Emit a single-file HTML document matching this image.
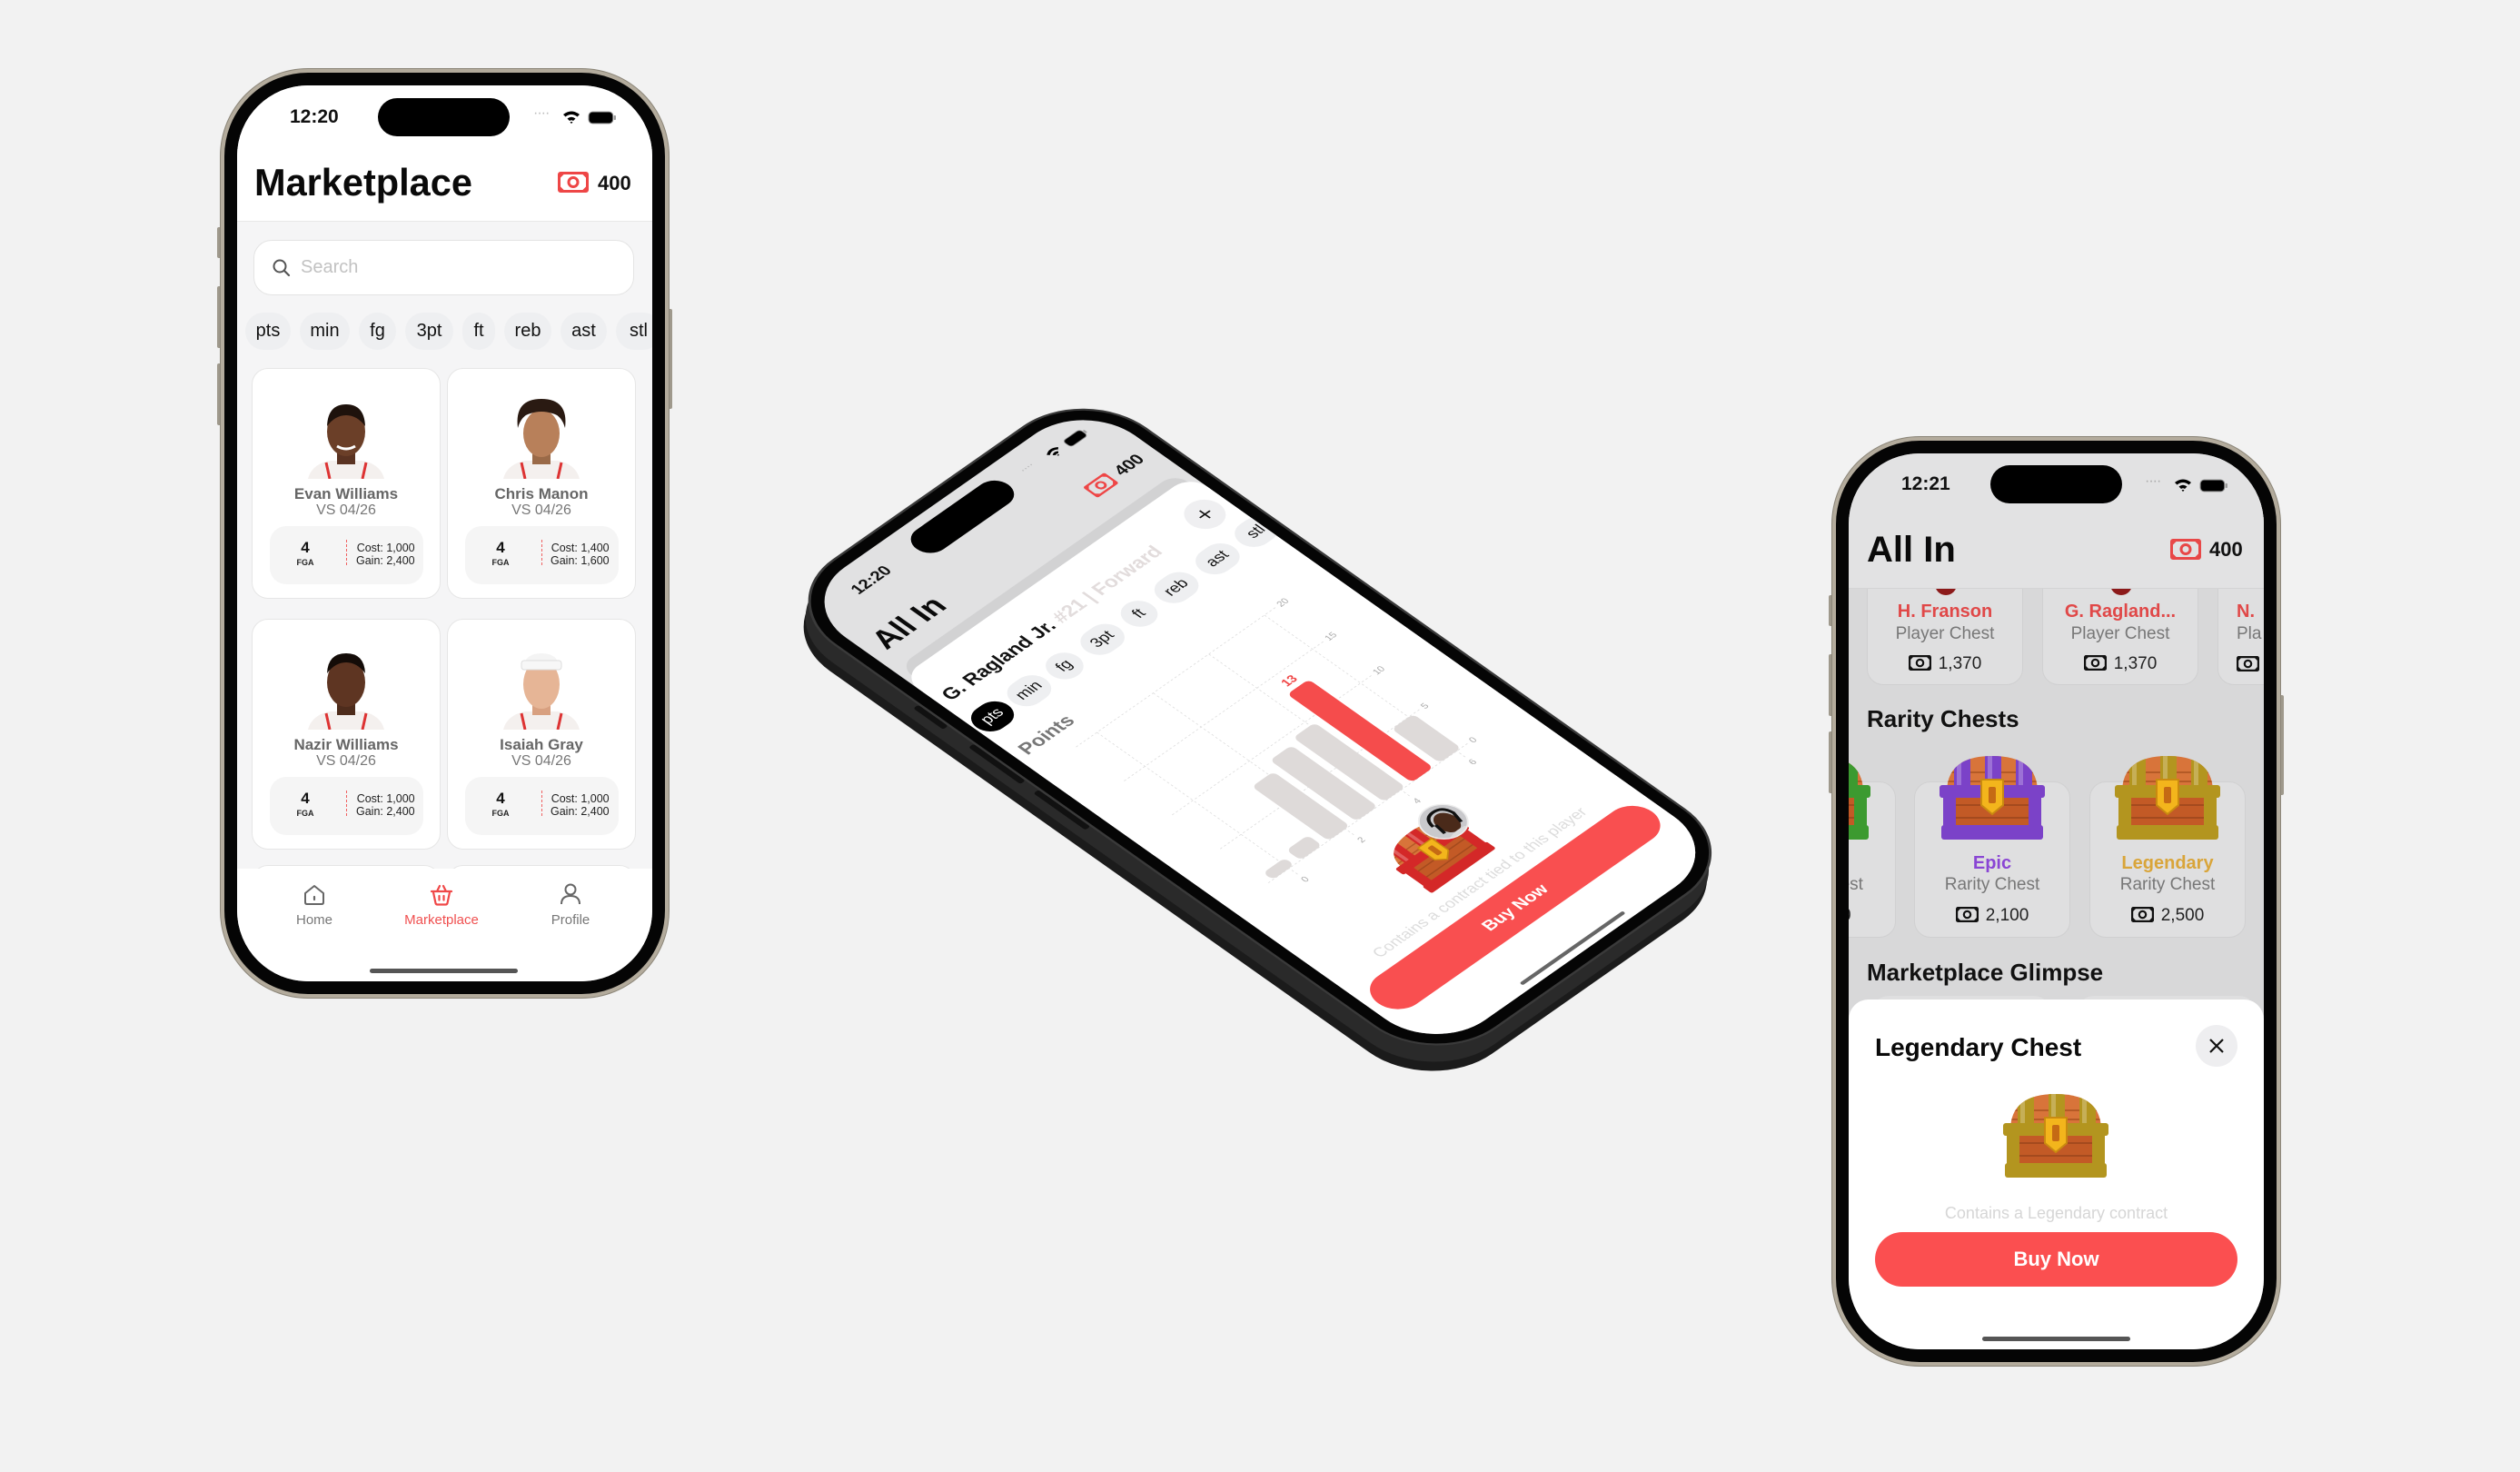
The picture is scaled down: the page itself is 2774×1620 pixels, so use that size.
<!DOCTYPE html>
<html><head><meta charset="utf-8">
<style>
*{margin:0;padding:0;box-sizing:border-box}
body{width:2774px;height:1620px;background:#f2f2f2;position:relative;overflow:hidden;font-family:"Liberation Sans",sans-serif}
.abs{position:absolute}
.phone{position:absolute;width:493px;height:1022px;border-radius:96px;background:#050505;border:4px solid #b3ab9c;box-shadow:0 0 0 1px #8c8679}
.screen{position:absolute;left:14px;top:14px;width:457px;height:986px;border-radius:78px;overflow:hidden;background:#fff}
.island{position:absolute;width:145px;height:42px;border-radius:21px;background:#000}
.btn{position:absolute;background:#9f998c;border-radius:2px}
.t{position:absolute;white-space:nowrap}
.chip{position:absolute;height:41px;border-radius:21px;background:#eeeff1;font-size:20px;color:#111;display:flex;align-items:center;justify-content:center}
.card{position:absolute;background:#fff;border:1.5px solid #e6e6e6;border-radius:18px}
.stat{position:absolute;background:#f5f5f5;border-radius:18px}
.c{text-align:center}
</style></head><body>

<svg width="0" height="0" style="position:absolute">
<defs>
<clipPath id="dome"><path d="M14 52 Q14 12 64 12 Q114 12 114 52 Z"/></clipPath>
<symbol id="cash" viewBox="0 0 34 23"><rect x="1.5" y="1.5" width="31" height="20" rx="1.5" fill="none" stroke="currentColor" stroke-width="3"/><circle cx="17" cy="11.5" r="5" fill="none" stroke="currentColor" stroke-width="3"/><path d="M1.5 6 L6 1.5 M28 1.5 L32.5 6 M1.5 17 L6 21.5 M28 21.5 L32.5 17" stroke="currentColor" stroke-width="3"/></symbol>
<symbol id="chest" viewBox="0 0 128 110">
<path d="M14 52 Q14 12 64 12 Q114 12 114 52 Z" fill="#d8743a"/>
<g clip-path="url(#dome)">
<path d="M14 30 H114 M14 40 H114" stroke="#b45a26" stroke-width="2"/>
<rect x="22" y="0" width="18" height="60" fill="var(--f)"/>
<rect x="56" y="0" width="18" height="60" fill="var(--f)"/>
<rect x="90" y="0" width="18" height="60" fill="var(--f)"/>
<rect x="25" y="0" width="5" height="60" fill="#fff" opacity="0.25"/>
<rect x="59" y="0" width="5" height="60" fill="#fff" opacity="0.25"/>
<rect x="93" y="0" width="5" height="60" fill="#fff" opacity="0.25"/>
</g>
<rect x="12" y="50" width="104" height="50" fill="#c35a26"/>
<path d="M14 66 H114 M14 80 H114" stroke="#a44a1e" stroke-width="2"/>
<rect x="6" y="44" width="116" height="14" rx="3" fill="var(--f)"/>
<rect x="8" y="88" width="112" height="16" rx="3" fill="var(--f)"/>
<rect x="10" y="50" width="14" height="50" fill="var(--f)"/>
<rect x="104" y="50" width="14" height="50" fill="var(--f)"/>
<path d="M52 38 H76 V66 L64 76 L52 66 Z" fill="#f3b51c" stroke="#c98a10" stroke-width="2"/>
<rect x="60" y="46" width="8" height="18" rx="2" fill="#c56a14"/>
</symbol>
<symbol id="wifi" viewBox="0 0 20 15"><path d="M1 5 Q10 -2 19 5 L16.5 7.5 Q10 2.5 3.5 7.5 Z M5.5 9.5 Q10 6 14.5 9.5 L12 12 Q10 10.5 8 12 Z M10 15 L8.5 13.5 Q10 12.5 11.5 13.5 Z" fill="#000"/></symbol>
<symbol id="batt" viewBox="0 0 30 14"><rect x="1" y="1" width="25" height="12" rx="4" fill="#000" stroke="#888" stroke-width="1"/><rect x="27" y="4.5" width="2" height="5" rx="1" fill="#999"/></symbol>
</defs>
</svg>

<!-- ============ LEFT PHONE ============ -->
<div class="btn" style="left:239px;top:250px;width:5px;height:34px"></div>
<div class="btn" style="left:239px;top:315px;width:5px;height:68px"></div>
<div class="btn" style="left:239px;top:400px;width:5px;height:68px"></div>
<div class="btn" style="left:735px;top:340px;width:5px;height:110px"></div>
<div class="phone" style="left:243px;top:76px">
 <div class="screen" style="background:#f5f5f6">
  <div class="abs" style="left:0;top:0;width:457px;height:150px;background:#fff;border-bottom:1.5px solid #e8e8e8"></div>
  <div class="t" style="left:58px;top:23px;font-size:21px;font-weight:bold;color:#111">12:20</div>
  <div class="island" style="left:155px;top:14px"></div>
  <div class="t" style="left:326px;top:22px;font-size:16px;color:#bbb;letter-spacing:-1px">····</div>
  <svg class="abs" style="left:358px;top:27px" width="20" height="15"><use href="#wifi"/></svg>
  <svg class="abs" style="left:386px;top:28px" width="32" height="15"><use href="#batt"/></svg>
  <div class="t" style="left:19px;top:83px;font-size:41.5px;font-weight:bold;color:#0a0a0a">Marketplace</div>
  <svg class="abs" style="left:353px;top:95px;color:#ee4646" width="34" height="23"><use href="#cash"/></svg>
  <div class="t" style="left:397px;top:95px;font-size:22px;font-weight:bold;color:#111">400</div>
  <div class="abs" style="left:18px;top:170px;width:419px;height:61px;background:#fff;border:1.5px solid #e4e4e4;border-radius:20px"></div>
  <svg class="abs" style="left:38px;top:190px" width="22" height="22" viewBox="0 0 22 22"><circle cx="9" cy="9" r="6.5" fill="none" stroke="#555" stroke-width="2"/><path d="M14 14 L19 19" stroke="#555" stroke-width="2.2" stroke-linecap="round"/></svg>
  <div class="t" style="left:70px;top:189px;font-size:20px;color:#c2c2c2">Search</div>
  <div class="chip" style="left:9px;top:250px;width:50px">pts</div>
  <div class="chip" style="left:69px;top:250px;width:55px">min</div>
  <div class="chip" style="left:134px;top:250px;width:41px">fg</div>
  <div class="chip" style="left:185px;top:250px;width:53px">3pt</div>
  <div class="chip" style="left:248px;top:250px;width:36px">ft</div>
  <div class="chip" style="left:294px;top:250px;width:52px">reb</div>
  <div class="chip" style="left:356px;top:250px;width:51px">ast</div>
  <div class="chip" style="left:417px;top:250px;width:50px">stl</div>

  <div class="card" style="left:16px;top:311px;width:208px;height:254px"></div>
  <div class="card" style="left:231px;top:311px;width:208px;height:254px"></div>
  <div class="card" style="left:16px;top:587px;width:208px;height:254px"></div>
  <div class="card" style="left:231px;top:587px;width:208px;height:254px"></div>
  <div class="card" style="left:16px;top:858px;width:208px;height:80px"></div>
  <div class="card" style="left:231px;top:858px;width:208px;height:80px"></div>

  <svg class="abs" style="left:72px;top:341px" width="96" height="92" viewBox="0 0 96 92"><path d="M6 92 Q10 76 30 72 L66 72 Q86 76 90 92 Z" fill="#f4f0ee"/><path d="M26 74 L30 92 M70 74 L66 92" stroke="#d33" stroke-width="3"/><rect x="38" y="58" width="20" height="18" fill="#5a3322"/><ellipse cx="48" cy="40" rx="21" ry="27" fill="#6b3f28"/><path d="M27 34 Q28 10 48 10 Q68 10 69 34 Q60 22 48 22 Q36 22 27 34Z" fill="#1e120c"/><path d="M38 56 Q48 62 58 56" stroke="#fff" stroke-width="3" fill="none"/></svg>
  <svg class="abs" style="left:287px;top:341px" width="96" height="92" viewBox="0 0 96 92"><path d="M6 92 Q10 76 30 72 L66 72 Q86 76 90 92 Z" fill="#f4f0ee"/><path d="M26 74 L30 92 M70 74 L66 92" stroke="#d33" stroke-width="3"/><rect x="38" y="58" width="20" height="18" fill="#9a6a48"/><ellipse cx="48" cy="42" rx="20" ry="26" fill="#b8805a"/><path d="M22 36 Q18 4 48 4 Q78 4 74 36 Q70 22 60 20 Q48 16 36 20 Q26 22 22 36Z" fill="#2a1a12"/></svg>
  <svg class="abs" style="left:72px;top:617px" width="96" height="92" viewBox="0 0 96 92"><path d="M6 92 Q10 76 30 72 L66 72 Q86 76 90 92 Z" fill="#f4f0ee"/><path d="M26 74 L30 92 M70 74 L66 92" stroke="#d33" stroke-width="3"/><rect x="38" y="58" width="20" height="18" fill="#4e2c1c"/><ellipse cx="48" cy="40" rx="21" ry="27" fill="#5e3522"/><path d="M27 30 Q28 8 48 8 Q68 8 69 30 Q60 18 48 18 Q36 18 27 30Z" fill="#140c08"/></svg>
  <svg class="abs" style="left:287px;top:617px" width="96" height="92" viewBox="0 0 96 92"><path d="M6 92 Q10 76 30 72 L66 72 Q86 76 90 92 Z" fill="#f4f0ee"/><path d="M26 74 L30 92 M70 74 L66 92" stroke="#d33" stroke-width="3"/><rect x="38" y="58" width="20" height="18" fill="#d8a080"/><ellipse cx="48" cy="42" rx="20" ry="27" fill="#e6b596"/><path d="M27 28 Q28 8 48 8 Q68 8 69 28 L69 24 L27 24Z" fill="#f4f4f4"/><rect x="26" y="16" width="44" height="10" rx="3" fill="#f7f7f7" stroke="#ddd"/></svg>

  <div class="t c" style="left:16px;width:208px;top:440px;font-size:17px;font-weight:bold;color:#666">Evan Williams</div>
  <div class="t c" style="left:16px;width:208px;top:459px;font-size:16px;color:#777">VS 04/26</div>
  <div class="t c" style="left:231px;width:208px;top:440px;font-size:17px;font-weight:bold;color:#666">Chris Manon</div>
  <div class="t c" style="left:231px;width:208px;top:459px;font-size:16px;color:#777">VS 04/26</div>
  <div class="t c" style="left:16px;width:208px;top:716px;font-size:17px;font-weight:bold;color:#666">Nazir Williams</div>
  <div class="t c" style="left:16px;width:208px;top:735px;font-size:16px;color:#777">VS 04/26</div>
  <div class="t c" style="left:231px;width:208px;top:716px;font-size:17px;font-weight:bold;color:#666">Isaiah Gray</div>
  <div class="t c" style="left:231px;width:208px;top:735px;font-size:16px;color:#777">VS 04/26</div>

  <div class="stat" style="left:36px;top:485px;width:169px;height:64px"></div>
  <div class="stat" style="left:251px;top:485px;width:169px;height:64px"></div>
  <div class="stat" style="left:36px;top:761px;width:169px;height:64px"></div>
  <div class="stat" style="left:251px;top:761px;width:169px;height:64px"></div>

  <div class="t c" style="left:55px;width:40px;top:499px;font-size:17px;font-weight:bold;color:#111">4</div>
  <div class="t c" style="left:55px;width:40px;top:520px;font-size:9px;font-weight:bold;color:#222">FGA</div>
  <div class="abs" style="left:120px;top:500px;height:28px;border-left:1.5px dashed #f06060"></div>
  <div class="t" style="left:131px;top:502px;font-size:12.5px;color:#222;line-height:14px;text-align:right">Cost: 1,000<br>Gain: 2,400</div>
  <div class="t c" style="left:270px;width:40px;top:499px;font-size:17px;font-weight:bold;color:#111">4</div>
  <div class="t c" style="left:270px;width:40px;top:520px;font-size:9px;font-weight:bold;color:#222">FGA</div>
  <div class="abs" style="left:335px;top:500px;height:28px;border-left:1.5px dashed #f06060"></div>
  <div class="t" style="left:345px;top:502px;font-size:12.5px;color:#222;line-height:14px;text-align:right">Cost: 1,400<br>Gain: 1,600</div>
  <div class="t c" style="left:55px;width:40px;top:775px;font-size:17px;font-weight:bold;color:#111">4</div>
  <div class="t c" style="left:55px;width:40px;top:796px;font-size:9px;font-weight:bold;color:#222">FGA</div>
  <div class="abs" style="left:120px;top:776px;height:28px;border-left:1.5px dashed #f06060"></div>
  <div class="t" style="left:131px;top:778px;font-size:12.5px;color:#222;line-height:14px;text-align:right">Cost: 1,000<br>Gain: 2,400</div>
  <div class="t c" style="left:270px;width:40px;top:775px;font-size:17px;font-weight:bold;color:#111">4</div>
  <div class="t c" style="left:270px;width:40px;top:796px;font-size:9px;font-weight:bold;color:#222">FGA</div>
  <div class="abs" style="left:335px;top:776px;height:28px;border-left:1.5px dashed #f06060"></div>
  <div class="t" style="left:345px;top:778px;font-size:12.5px;color:#222;line-height:14px;text-align:right">Cost: 1,000<br>Gain: 2,400</div>

  <div class="abs" style="left:0;top:862px;width:457px;height:124px;background:#fff"></div>
  <svg class="abs" style="left:72px;top:878px" width="26" height="26" viewBox="0 0 26 26"><path d="M3 11 L13 3 L23 11 V21 Q23 23 21 23 H5 Q3 23 3 21 Z" fill="none" stroke="#666" stroke-width="2" stroke-linejoin="round"/><path d="M13 15 V18" stroke="#666" stroke-width="2.2" stroke-linecap="round"/></svg>
  <div class="t c" style="left:45px;width:80px;top:910px;font-size:15px;color:#777">Home</div>
  <svg class="abs" style="left:212px;top:878px" width="26" height="26" viewBox="0 0 26 26"><path d="M2 9 H24 M8 9 L11 3 M18 9 L15 3" stroke="#f04848" stroke-width="2.2" fill="none" stroke-linecap="round"/><path d="M4 10 L6.5 22 Q7 23.5 8.5 23.5 H17.5 Q19 23.5 19.5 22 L22 10" fill="none" stroke="#f04848" stroke-width="2.2"/><path d="M10.5 14 V18.5 M15.5 14 V18.5" stroke="#f04848" stroke-width="2.2" stroke-linecap="round"/></svg>
  <div class="t c" style="left:175px;width:100px;top:910px;font-size:15px;color:#f05050">Marketplace</div>
  <svg class="abs" style="left:354px;top:877px" width="26" height="26" viewBox="0 0 26 26"><circle cx="13" cy="8" r="5.5" fill="none" stroke="#666" stroke-width="2"/><path d="M3 24 Q3 15 13 15 Q23 15 23 24" fill="none" stroke="#666" stroke-width="2"/></svg>
  <div class="t c" style="left:327px;width:80px;top:910px;font-size:15px;color:#777">Profile</div>
  <div class="abs" style="left:146px;top:972px;width:163px;height:5px;border-radius:3px;background:#555"></div>
 </div>
</div>

<!-- ============ MIDDLE PHONE (tilted) ============ -->
<div class="abs" style="left:0;top:0;width:493px;height:1022px;transform-origin:0 0;transform:matrix(0.696,-0.487,0.7149,0.5053,845,690);border-radius:96px;background:#1b1b1b"></div>
<div class="abs" style="left:0;top:0;width:493px;height:1022px;transform-origin:0 0;transform:matrix(0.696,-0.487,0.7149,0.5053,847,680);border-radius:96px;background:#2a2a2a"></div>
<div class="abs" style="left:0;top:0;width:493px;height:1022px;transform-origin:0 0;transform:matrix(0.696,-0.487,0.7149,0.5053,850,662)">
 <div class="abs" style="left:-8px;top:225px;width:8px;height:46px;background:#111;border-radius:3px"></div>
 <div class="abs" style="left:-8px;top:310px;width:8px;height:80px;background:#111;border-radius:3px"></div>
 <div class="abs" style="left:-8px;top:410px;width:8px;height:80px;background:#111;border-radius:3px"></div>
 <div class="abs" style="left:0;top:0;width:493px;height:1022px;border-radius:96px;background:#050505;border:3px solid #3a3a3a">
 <div class="screen" style="left:15px;top:15px;background:#e1e1e2">
  <div class="t" style="left:58px;top:23px;font-size:21px;font-weight:bold;color:#111">12:20</div>
  <div class="island" style="left:156px;top:14px"></div>
  <div class="t" style="left:326px;top:22px;font-size:16px;color:#bbb;letter-spacing:-1px">····</div>
  <svg class="abs" style="left:364px;top:27px" width="20" height="15"><use href="#wifi"/></svg>
  <svg class="abs" style="left:392px;top:28px" width="32" height="15"><use href="#batt"/></svg>
  <div class="t" style="left:18px;top:88px;font-size:40px;font-weight:bold;color:#0a0a0a">All In</div>
  <svg class="abs" style="left:357px;top:95px;color:#ee4646" width="34" height="23"><use href="#cash"/></svg>
  <div class="t" style="left:401px;top:93px;font-size:22px;font-weight:bold;color:#111">400</div>
  <div class="abs" style="left:10px;top:150px;width:437px;height:40px;background:#d2d2d3;border-radius:20px"></div>
  <div class="abs" style="left:0;top:164px;width:457px;height:830px;background:#fff;border-radius:26px 26px 0 0"></div>
  <div class="t" style="left:12px;top:206px;font-size:25px;font-weight:bold;color:#111">G. Ragland Jr. <span style="color:#e2dcdc">#21 | Forward</span></div>
  <div class="abs" style="left:401px;top:195px;width:46px;height:46px;border-radius:23px;background:#efeff1"></div>
  <svg class="abs" style="left:414px;top:208px" width="20" height="20" viewBox="0 0 20 20"><path d="M2 10 H18 M10 2 V18" stroke="#111" stroke-width="2"/></svg>
  <div class="chip" style="left:3px;top:256px;width:50px;background:#000;color:#fff">pts</div>
  <div class="chip" style="left:60px;top:256px;width:52px">min</div>
  <div class="chip" style="left:121px;top:256px;width:42px">fg</div>
  <div class="chip" style="left:176px;top:256px;width:52px">3pt</div>
  <div class="chip" style="left:240px;top:256px;width:40px">ft</div>
  <div class="chip" style="left:293px;top:256px;width:52px">reb</div>
  <div class="chip" style="left:358px;top:256px;width:52px">ast</div>
  <div class="chip" style="left:420px;top:256px;width:50px">stl</div>
  <div class="t" style="left:12px;top:324px;font-size:25px;font-weight:bold;color:#777">Points</div>
  <svg class="abs" style="left:40px;top:360px" width="400" height="350" viewBox="40 360 400 350">
   <g stroke="#ddd" stroke-width="1" stroke-dasharray="3 3">
    <path d="M60 374 H375 M60 448 H375 M60 522 H375 M60 596 H375 M60 670 H375"/>
    <path d="M93 374 V685 M182 374 V685 M270 374 V685 M358 374 V685"/>
   </g>
   <g fill="#dedad9">
    <rect x="67" y="655" width="34" height="15" rx="7"/>
    <rect x="111" y="648" width="34" height="22" rx="7"/>
    <rect x="155" y="552" width="34" height="118" rx="7"/>
    <rect x="199" y="537" width="34" height="133" rx="7"/>
    <rect x="243" y="530" width="34" height="140" rx="7"/>
    <rect x="331" y="596" width="34" height="74" rx="7"/>
   </g>
   <rect x="287" y="478" width="34" height="192" rx="7" fill="#f54c4c"/>
   <text x="295" y="470" font-size="16" fill="#f04848" font-family="Liberation Sans" font-weight="bold">13</text>
   <g font-size="12" fill="#aaa" font-family="Liberation Sans">
    <text x="380" y="378">20</text><text x="380" y="452">15</text><text x="380" y="526">10</text><text x="380" y="600">5</text><text x="380" y="674">0</text>
    <text x="90" y="698">0</text><text x="179" y="698">2</text><text x="267" y="698">4</text><text x="355" y="698">6</text>
   </g>
  </svg>
  <svg class="abs" style="left:170px;top:712px" width="118" height="100"><use href="#chest" style="--f:#d42828"/></svg>
  <div class="abs" style="left:240px;top:709px;width:56px;height:56px;border-radius:28px;background:#c9c9cc;border:2px solid #eee;overflow:hidden">
   <svg width="56" height="56" viewBox="0 0 56 56"><ellipse cx="28" cy="30" rx="13" ry="17" fill="#4a2a1a"/><path d="M12 24 Q14 8 28 8 Q42 8 44 24 L40 40 M16 24 L14 40" stroke="#111" stroke-width="4" fill="none"/><path d="M8 56 Q12 46 28 46 Q44 46 48 56Z" fill="#ddd"/></svg>
  </div>
  <div class="t c" style="left:0;width:457px;top:821px;font-size:20px;color:#dcdcdc">Contains a contract tied to this player</div>
  <div class="abs" style="left:12px;top:856px;width:433px;height:60px;border-radius:30px;background:#f94f50;color:#fff;font-size:22px;font-weight:bold;display:flex;align-items:center;justify-content:center">Buy Now</div>
  <div class="abs" style="left:147px;top:972px;width:163px;height:5px;border-radius:3px;background:#666"></div>
 </div>
 </div>
</div>

<!-- ============ RIGHT PHONE ============ -->
<div class="btn" style="left:2013px;top:655px;width:5px;height:34px"></div>
<div class="btn" style="left:2013px;top:720px;width:5px;height:68px"></div>
<div class="btn" style="left:2013px;top:805px;width:5px;height:68px"></div>
<div class="btn" style="left:2509px;top:765px;width:5px;height:110px"></div>
<div class="phone" style="left:2017px;top:481px">
 <div class="screen" style="background:#d8d8d9">
  <div class="abs" style="left:20px;top:40px;width:172px;height:215px;background:#dfdfe0;border:1.5px solid #d0d0d1;border-radius:18px"></div>
  <div class="abs" style="left:213px;top:40px;width:172px;height:215px;background:#dfdfe0;border:1.5px solid #d0d0d1;border-radius:18px"></div>
  <div class="abs" style="left:406px;top:40px;width:172px;height:215px;background:#dfdfe0;border:1.5px solid #d0d0d1;border-radius:18px"></div>
  <div class="abs" style="left:95px;top:140px;width:24px;height:16px;border-radius:0 0 12px 12px;background:#8c1a1a"></div>
  <div class="abs" style="left:288px;top:140px;width:24px;height:16px;border-radius:0 0 12px 12px;background:#8c1a1a"></div>
  <div class="abs" style="left:0;top:0;width:457px;height:149px;background:#e2e2e3;border-bottom:1px solid #d4d4d5"></div>
  <div class="t" style="left:58px;top:22px;font-size:21px;font-weight:bold;color:#111">12:21</div>
  <div class="island" style="left:156px;top:13px"></div>
  <div class="t" style="left:326px;top:22px;font-size:16px;color:#aaa;letter-spacing:-1px">····</div>
  <svg class="abs" style="left:358px;top:27px" width="20" height="15"><use href="#wifi"/></svg>
  <svg class="abs" style="left:386px;top:28px" width="32" height="15"><use href="#batt"/></svg>
  <div class="t" style="left:20px;top:84px;font-size:40px;font-weight:bold;color:#0a0a0a">All In</div>
  <svg class="abs" style="left:354px;top:94px;color:#e84848" width="34" height="23"><use href="#cash"/></svg>
  <div class="t" style="left:397px;top:93px;font-size:22px;font-weight:bold;color:#111">400</div>

  <div class="t c" style="left:20px;width:172px;top:163px;font-size:20px;font-weight:bold;color:#e04848">H. Franson</div>
  <div class="t c" style="left:20px;width:172px;top:188px;font-size:19px;color:#777">Player Chest</div>
  <div class="t c" style="left:20px;width:172px;top:221px;font-size:19px;color:#222"><svg width="25" height="17" style="vertical-align:-2px;color:#111;margin-right:8px"><use href="#cash"/></svg>1,370</div>
  <div class="t c" style="left:213px;width:172px;top:163px;font-size:20px;font-weight:bold;color:#e04848">G. Ragland...</div>
  <div class="t c" style="left:213px;width:172px;top:188px;font-size:19px;color:#777">Player Chest</div>
  <div class="t c" style="left:213px;width:172px;top:221px;font-size:19px;color:#222"><svg width="25" height="17" style="vertical-align:-2px;color:#111;margin-right:8px"><use href="#cash"/></svg>1,370</div>
  <div class="t" style="left:427px;top:163px;font-size:20px;font-weight:bold;color:#e04848">N.</div>
  <div class="t" style="left:427px;top:188px;font-size:19px;color:#777">Pla</div>
  <svg class="abs" style="left:427px;top:223px;color:#111" width="25" height="17"><use href="#cash"/></svg>

  <div class="t" style="left:20px;top:277px;font-size:26px;font-weight:bold;color:#111">Rarity Chests</div>
  <div class="abs" style="left:-120px;top:361px;width:172px;height:172px;background:#dfdfe0;border:1.5px solid #d0d0d1;border-radius:18px"></div>
  <div class="abs" style="left:72px;top:361px;width:172px;height:172px;background:#dfdfe0;border:1.5px solid #d0d0d1;border-radius:18px"></div>
  <div class="abs" style="left:265px;top:361px;width:172px;height:172px;background:#dfdfe0;border:1.5px solid #d0d0d1;border-radius:18px"></div>
  <svg class="abs" style="left:-98px;top:321px" width="128" height="110"><use href="#chest" style="--f:#3c9a30"/></svg>
  <svg class="abs" style="left:94px;top:321px" width="128" height="110"><use href="#chest" style="--f:#7b42c8"/></svg>
  <svg class="abs" style="left:287px;top:321px" width="128" height="110"><use href="#chest" style="--f:#b3951f"/></svg>
  <div class="t" style="left:-20px;top:464px;font-size:19px;color:#777">hest</div>
  <div class="t" style="left:-8px;top:498px;font-size:19px;color:#222">0</div>
  <div class="t c" style="left:72px;width:172px;top:440px;font-size:20px;font-weight:bold;color:#8a46d4">Epic</div>
  <div class="t c" style="left:72px;width:172px;top:464px;font-size:19px;color:#777">Rarity Chest</div>
  <div class="t c" style="left:72px;width:172px;top:498px;font-size:19px;color:#222"><svg width="25" height="17" style="vertical-align:-2px;color:#111;margin-right:8px"><use href="#cash"/></svg>2,100</div>
  <div class="t c" style="left:265px;width:172px;top:440px;font-size:20px;font-weight:bold;color:#d9a53a">Legendary</div>
  <div class="t c" style="left:265px;width:172px;top:464px;font-size:19px;color:#777">Rarity Chest</div>
  <div class="t c" style="left:265px;width:172px;top:498px;font-size:19px;color:#222"><svg width="25" height="17" style="vertical-align:-2px;color:#111;margin-right:8px"><use href="#cash"/></svg>2,500</div>

  <div class="t" style="left:20px;top:556px;font-size:26px;font-weight:bold;color:#111">Marketplace Glimpse</div>
  <div class="abs" style="left:26px;top:597px;width:196px;height:40px;background:#dfdfe0;border-radius:18px"></div>
  <div class="abs" style="left:252px;top:597px;width:196px;height:40px;background:#dfdfe0;border-radius:18px"></div>

  <div class="abs" style="left:0;top:601px;width:457px;height:400px;background:#fff;border-radius:22px 22px 0 0"></div>
  <div class="t" style="left:29px;top:638px;font-size:28px;font-weight:bold;color:#0a0a0a">Legendary Chest</div>
  <div class="abs" style="left:382px;top:629px;width:46px;height:46px;border-radius:23px;background:#eeeef0"></div>
  <svg class="abs" style="left:396px;top:643px" width="18" height="18" viewBox="0 0 18 18"><path d="M2 2 L16 16 M16 2 L2 16" stroke="#111" stroke-width="2.2"/></svg>
  <svg class="abs" style="left:164px;top:693px" width="128" height="110"><use href="#chest" style="--f:#b3951f"/></svg>
  <div class="t c" style="left:0;width:457px;top:826px;font-size:18px;color:#d6d6d6">Contains a Legendary contract</div>
  <div class="abs" style="left:29px;top:857px;width:399px;height:60px;border-radius:30px;background:#fb4f50;color:#fff;font-size:22px;font-weight:bold;display:flex;align-items:center;justify-content:center">Buy Now</div>
  <div class="abs" style="left:147px;top:972px;width:163px;height:5px;border-radius:3px;background:#555"></div>
 </div>
</div>

</body></html>
